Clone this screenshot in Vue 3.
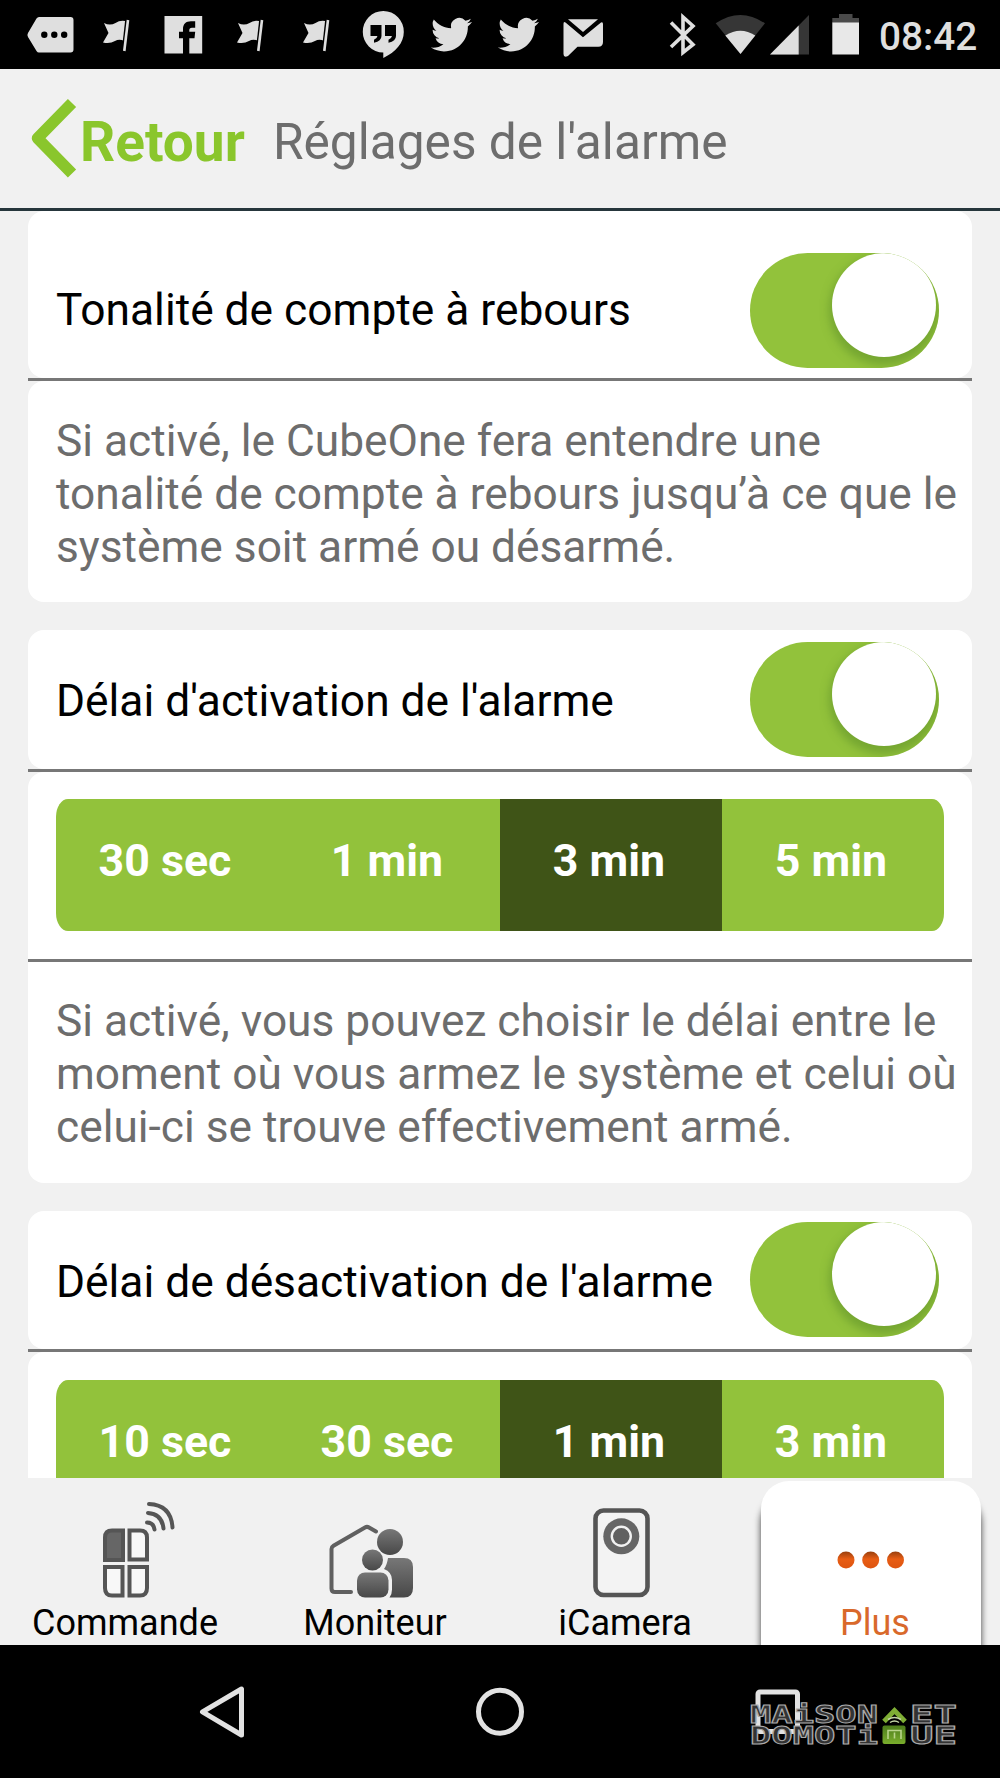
<script setup>
const cards = [
  {
    id: 'tone',
    first: true,
    label: 'Tonalité de compte à rebours',
    lines: [
      'Si activé, le CubeOne fera entendre une',
      'tonalité de compte à rebours jusqu’à ce que le',
      'système soit armé ou désarmé.',
    ],
  },
  {
    id: 'arm',
    label: "Délai d'activation de l'alarme",
    options: ['30 sec', '1 min', '3 min', '5 min'],
    selected: 2,
    lines: [
      'Si activé, vous pouvez choisir le délai entre le',
      'moment où vous armez le système et celui où',
      'celui-ci se trouve effectivement armé.',
    ],
  },
  {
    id: 'disarm',
    label: "Délai de désactivation de l'alarme",
    options: ['10 sec', '30 sec', '1 min', '3 min'],
    selected: 2,
    lines: [],
  },
]
</script>

<template>
  <div class="phone">
    <div class="status">
      <svg class="defs" width="0" height="0">
        <defs>
          <g id="flag">
            <path d="M21 23q6 3 11.500 0q5-3.500 12-1.500L41.300 41q-5-2.500-9.300 0q-5 3-12 1.500l5.500-9.500z" />
            <path d="M44 20L40.500 51" fill="none" stroke="#000" stroke-width="3.600" />
            <path d="M45 20L41.300 51" fill="none" stroke="#dfdfdf" stroke-width="2.600" />
          </g>
          <path id="bird" d="M23.953 4.57a10 10 0 01-2.825.775 4.958 4.958 0 002.163-2.723c-.951.555-2.005.959-3.127 1.184a4.92 4.92 0 00-8.384 4.482C7.69 8.095 4.067 6.13 1.64 3.162a4.822 4.822 0 00-.666 2.475c0 1.71.87 3.213 2.188 4.096a4.904 4.904 0 01-2.228-.616v.06a4.923 4.923 0 003.946 4.827 4.996 4.996 0 01-2.212.085 4.936 4.936 0 004.604 3.417 9.867 9.867 0 01-6.102 2.105c-.39 0-.779-.023-1.17-.067a13.995 13.995 0 007.557 2.209c9.053 0 13.998-7.496 13.998-13.985 0-.21 0-.42-.015-.63A9.935 9.935 0 0024 4.59z" />
          <linearGradient id="metal" x1="0" y1="0" x2="0" y2="1">
            <stop offset="0" stop-color="#777" />
            <stop offset="1" stop-color="#484848" />
          </linearGradient>
          <linearGradient id="ember" x1="0" y1="0" x2="0" y2="1">
            <stop offset="0" stop-color="#98400f" />
            <stop offset=".45" stop-color="#e85d14" />
            <stop offset="1" stop-color="#dd5410" />
          </linearGradient>
          <linearGradient id="leaf" x1="0" y1="0" x2="0" y2="1">
            <stop offset="0" stop-color="#4d7d1c" />
            <stop offset="1" stop-color="#79ad2c" />
          </linearGradient>
        </defs>
      </svg>
      <div class="notices">
        <svg viewBox="0 0 66.700 70">
          <path d="M22 17H53.500q3 0 3 3V49.500q0 3-3 3H22q-1.500 0-2.500-1.500L11 37q-1.200-2 0-4L19.500 18.500q1-1.500 2.500-1.500z" />
          <g fill="#000"><circle cx="27.300" cy="34.700" r="3.200" /><circle cx="37.300" cy="34.700" r="3.200" /><circle cx="47.200" cy="34.700" r="3.200" /></g>
        </svg>
        <svg viewBox="0 0 66.700 70"><use href="#flag" /></svg>
        <svg viewBox="0 0 66.700 70">
          <rect x="14.500" y="16" width="37.700" height="37.500" />
          <path fill="#000" d="M33 54V38.300H29V31.700H33V29c0-5 3-7.700 8-7.700h4.200v6.400H42c-2 0-2.700.8-2.700 2.600v1.400H45.200l-.7 6.600H39.300V54z" />
        </svg>
        <svg viewBox="0 0 66.700 70"><use href="#flag" /></svg>
        <svg viewBox="0 0 66.700 70"><use href="#flag" /></svg>
        <svg viewBox="0 0 66.700 70">
          <path d="M33.300 11a20.500 20.500 0 0 1 20.500 21c0 11-8 20-20.500 26V52.500A20.500 20.500 0 0 1 12.800 32A20.500 20.500 0 0 1 33.300 11z" />
          <path fill="#000" d="M20.500 25H31.500V36q0 5-7.500 6.700v-3q3-1 3.500-3.700H20.500zM35 25H46V36q0 5-7.500 6.700v-3q3-1 3.500-3.700H35z" />
        </svg>
        <svg viewBox="0 0 66.700 70"><use href="#bird" transform="translate(14 14.200) scale(1.710)" /></svg>
        <svg viewBox="0 0 66.700 70"><use href="#bird" transform="translate(14 14.200) scale(1.710)" /></svg>
        <svg viewBox="0 0 66.700 70">
          <path d="M18 19.300H48L33 32z" />
          <path d="M13.500 24q0-3 2-1.500L33 37.300L51 22.500q2-1 2 1.500V42q0 4.700-4.700 4.700H27.500L18 56q-4.500 2-4.500-2z" />
        </svg>
      </div>
      <svg class="system" viewBox="660 0 206 70">
        <path d="M671 22.500L693 44.500L683 52.500V17L693 26L671 47" fill="none" stroke="#dfdfdf" stroke-width="3.600" />
        <path fill="#363636" d="M715.700 23.300Q740.500 6.500 765 23.300L740.500 54z" />
        <path d="M725.300 35.500Q740.500 26 755.300 35.500L740.500 54z" />
        <path fill="#363636" d="M770 54.500L809 15V54.500z" />
        <path d="M770 54.500L798.700 25.500V54.500z" />
        <path fill="#4a4a4a" d="M832.300 23V18H839V14H852.500V18H859V23z" />
        <path fill="#e8e8e8" d="M832.300 22.500H859V54.500H832.300z" />
      </svg>
      <span class="clock">08:42</span>
    </div>

    <header class="header">
      <svg class="chevron" viewBox="28 95 52 86"><path d="M72 102L37.500 137.200L72 172.500" fill="none" stroke="#8ac62c" stroke-width="11.500" stroke-linejoin="round" /></svg>
      <span class="back">Retour</span>
      <span class="title">Réglages de l'alarme</span>
    </header>

    <main class="content">
      <section v-for="card in cards" :key="card.id" class="card">
        <div class="row" :class="{ 'row-first': card.first }">
          <span class="label">{{ card.label }}</span>
          <span class="toggle"><span class="knob"></span></span>
        </div>
        <div class="line"></div>
        <template v-if="card.options">
          <div class="choices">
            <div class="segments">
              <span v-for="(option, i) in card.options" :key="option" class="segment" :class="{ on: i === card.selected }">{{ option }}</span>
            </div>
          </div>
          <div class="line"></div>
        </template>
        <div v-if="card.lines.length" class="note" :class="{ flat: card.options }">
          <div v-for="text in card.lines" :key="text">{{ text }}</div>
        </div>
      </section>
    </main>

    <nav class="tabs">
      <div class="tab">
        <svg viewBox="0 1478 250 130">
          <g fill="none" stroke="#555" stroke-width="4">
            <path fill="#666" d="M123 1530.500H112q-7 0-7 7V1560H123z" />
            <path fill="#f8f8f8" d="M129.500 1530.500H140q7 0 7 7V1559.500H129.500z" />
            <path fill="#f8f8f8" d="M122.500 1567H105V1588q0 7.500 7 7.500H122.500z" />
            <path fill="#f8f8f8" d="M129.500 1567H147V1588q0 7.500-7 7.500H129.500z" />
            <g stroke-linecap="round"><path d="M147 1522.500q6.500 0 7.500 7" /><path d="M148 1513q14 1 15.500 15.500" /><path d="M149 1504q22 1 23.500 23.500" /></g>
          </g>
        </svg>
        <span>Commande</span>
      </div>
      <div class="tab">
        <svg viewBox="250 1478 250 130">
          <path d="M351 1592H335q-3.500 0-3.500-3.500V1549q0-2 2-3.200L365 1527.500q2-1.200 4 0L376 1531.500" fill="none" stroke="#606060" stroke-width="4" stroke-linecap="round" />
          <g fill="url(#metal)">
            <circle cx="390" cy="1542" r="13" />
            <path d="M388 1558H404q9 0 9 9V1588q0 9.500-9 9.500H389.500q2.500-3 2.500-8V1580q0-8-8-11q3-4 4-11z" />
            <circle cx="372.500" cy="1560" r="10.500" />
            <rect x="357" y="1572.500" width="31.500" height="25" rx="8" />
          </g>
        </svg>
        <span>Moniteur</span>
      </div>
      <div class="tab">
        <svg viewBox="500 1478 250 130">
          <rect x="595.500" y="1510.500" width="52" height="84.500" rx="8" fill="#f3f3f3" stroke="#555" stroke-width="4.600" />
          <circle cx="621.300" cy="1536.300" r="18" fill="#666" />
          <circle cx="621.300" cy="1536.300" r="9.500" fill="#606060" stroke="#f1f1f1" stroke-width="2.400" />
        </svg>
        <span>iCamera</span>
      </div>
      <div class="tab">
        <div class="active">
          <svg viewBox="761 1481 220 127">
            <g fill="url(#ember)"><circle cx="846" cy="1560" r="8.500" /><circle cx="870.700" cy="1560" r="8.500" /><circle cx="895.500" cy="1560" r="8.500" /></g>
          </svg>
          <span class="plus">Plus</span>
        </div>
      </div>
    </nav>

    <footer class="system-nav">
      <svg viewBox="0 1644.500 1000 134">
        <g fill="none" stroke="#e2e2e2" stroke-width="5" stroke-linejoin="round">
          <path d="M202.500 1711.300L241.500 1688.500V1734.500z" />
          <circle cx="500" cy="1711.200" r="21.500" />
          <rect x="758" y="1691.500" width="39.500" height="39.500" rx="2" />
        </g>
        <text class="brand">
          <tspan x="750" y="1722" textLength="128" lengthAdjust="spacingAndGlyphs">MAiSON</tspan>
          <tspan x="910" y="1722" textLength="47" lengthAdjust="spacingAndGlyphs">ET</tspan>
          <tspan x="750" y="1743.500" textLength="128" lengthAdjust="spacingAndGlyphs">DOMOTi</tspan>
          <tspan x="910" y="1743.500" textLength="47" lengthAdjust="spacingAndGlyphs">UE</tspan>
        </text>
        <path d="M884 1721L894.500 1710L905 1721" fill="none" stroke="#7fae35" stroke-width="5" />
        <path d="M888 1719q6.500-4 13 0M890 1722q4.500-3 9 0" fill="none" stroke="#c5d7a8" stroke-width="1.500" />
        <rect x="882.500" y="1725" width="23" height="18.500" rx="2" fill="url(#leaf)" />
        <path d="M888 1738.500V1730H901V1738.500M894.500 1732V1738" fill="none" stroke="#b8d48a" stroke-width="1.600" />
      </svg>
    </footer>
  </div>
</template>

<style>
body {
  margin: 0;
  background: #f1f1f1;
}
</style>

<style scoped>
.phone {
  display: flex;
  flex-direction: column;
  width: 1000px;
  height: 1778px;
  overflow: hidden;
  background: #f1f1f1;
  font-family: Roboto, 'Liberation Sans', sans-serif;
  color: #000;
}
.phone span,
.note div {
  white-space: nowrap;
}
svg {
  display: block;
  flex: none;
}
.status {
  display: flex;
  height: 69px;
  flex: none;
  background: #000;
  fill: #dfdfdf;
}
.defs {
  width: 0;
  height: 0;
}
.notices {
  display: flex;
  width: 643.300px;
  padding-left: 16.700px;
  flex: none;
}
.notices svg {
  width: 66.700px;
  height: 70px;
}
.system {
  width: 206px;
  height: 70px;
}
.clock {
  margin-left: 13px;
  font-size: 38.800px;
  font-weight: 500;
  line-height: 73px;
  color: #dfdfdf;
}
.header {
  display: flex;
  align-items: center;
  box-sizing: border-box;
  height: 142px;
  flex: none;
  padding-left: 28px;
  border-bottom: 3px solid #26363c;
}
.chevron {
  width: 52px;
  height: 86px;
}
.back {
  width: 193px;
  line-height: 60px;
  font-size: 55px;
  font-weight: 700;
  padding-top: 6px;
  color: #8ac62c;
}
.title {
  font-size: 49.600px;
  padding-top: 6px;
  color: #6d6d6d;
}
.content {
  display: flex;
  flex-direction: column;
  gap: 28px;
  height: 1267px;
  flex: none;
  overflow: hidden;
  padding: 0 28px;
}
.card {
  flex: none;
}
.row {
  display: flex;
  align-items: center;
  justify-content: space-between;
  box-sizing: border-box;
  height: 138.500px;
  padding: 0 33px 0 28px;
  border-radius: 16px;
  background: #fff;
}
.row-first {
  height: 167px;
  padding-top: 31px;
}
.label {
  font-size: 44.300px;
  line-height: 53px;
  padding-top: 5px;
}
.row-first .label {
  padding: 1px 0 0;
}
.toggle {
  width: 189px;
  height: 115px;
  flex: none;
  overflow: hidden;
  border-radius: 58px;
  background: #92c23b;
}
.knob {
  display: block;
  width: 104px;
  height: 104px;
  margin: 0 0 0 81.500px;
  border-radius: 50%;
  background: #fff;
  box-shadow: 0 5px 8px 3px rgba(90, 140, 40, 0.5);
}
.line {
  height: 3px;
  background: #777;
}
.choices {
  height: 187px;
  box-sizing: border-box;
  padding: 27.500px 28px 0;
  border-radius: 16px 16px 0 0;
  background: #fff;
}
.segments {
  display: flex;
  height: 132px;
  overflow: hidden;
  border-radius: 12px / 18px;
  background: #92c23b;
}
.segment {
  flex: 1;
  box-sizing: border-box;
  padding-right: 4px;
  text-align: center;
  font-size: 44.700px;
  font-weight: 700;
  line-height: 124px;
  color: #fff;
}
.segment.on {
  background: #3f5417;
}
.note {
  height: 221px;
  box-sizing: border-box;
  padding: 33.500px 28px 0;
  border-radius: 16px;
  background: #fff;
  font-size: 44.250px;
  line-height: 53px;
  color: #6d6d6d;
}
.note.flat {
  border-radius: 0 0 16px 16px;
}
.tabs {
  display: flex;
  height: 166.500px;
  flex: none;
  overflow: hidden;
}
.tab {
  width: 250px;
  text-align: center;
  font-size: 36px;
  line-height: 40px;
}
.tab > svg {
  width: 250px;
  height: 130px;
  margin-bottom: -5.500px;
}
.active {
  width: 220px;
  height: 170px;
  margin: 3px 0 0 11px;
  border-radius: 28px 28px 0 0;
  background: #fff;
  box-shadow: 0 14px 7px rgba(0, 0, 0, 0.75);
  color: #d9692b;
}
.active svg {
  width: 220px;
  height: 127px;
  margin-bottom: -5.500px;
}
.plus {
  padding-left: 8px;
}
.system-nav {
  flex: 1;
  background: #000;
}
.system-nav svg {
  width: 1000px;
  height: 134px;
}
.brand {
  font-family: 'DejaVu Sans Mono', monospace;
  font-size: 25px;
  font-weight: 700;
  fill: #333;
  stroke: #aaa;
  stroke-width: 1;
}
</style>
